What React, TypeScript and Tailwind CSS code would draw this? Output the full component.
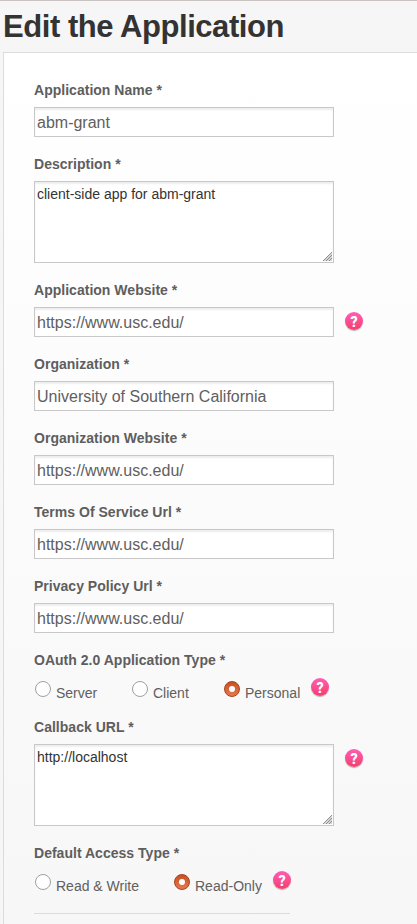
import React from "react";

function Label({ text }: { text: string }) {
  return (
    <div className="mb-[7px] h-5 whitespace-nowrap text-[14px] font-bold leading-5 tracking-[0.02px] text-[#5e5e5e]">
      {text} *
    </div>
  );
}

function Help({ className = "" }: { className?: string }) {
  return (
    <span
      className={`flex h-[18px] w-[18px] shrink-0 items-center justify-center rounded-full bg-linear-to-b from-[#ff5cb5] to-[#f43d6c] pt-px font-[Roboto,sans-serif] text-[14px] font-black leading-none text-white shadow-[0_1px_1px_rgba(0,0,0,0.3)] ${className}`}
    >
      ?
    </span>
  );
}

const box =
  "block w-[300px] rounded-none border border-[#c8c8c8] bg-white px-[2px] shadow-[inset_0_2px_2px_rgba(0,0,0,0.07)] outline-none";

function TextField({ label, value, help }: { label: string; value: string; help?: boolean }) {
  return (
    <div className="pt-[17px]">
      <Label text={label} />
      <div className="flex items-start">
        <input className={`${box} h-[30px] pt-[2px] text-[16px] text-[#606060]`} defaultValue={value} />
        {help && <Help className="ml-[11px] mt-[5px]" />}
      </div>
    </div>
  );
}

function AreaField({ label, value, help }: { label: string; value: string; help?: boolean }) {
  return (
    <div className="pt-[17px]">
      <Label text={label} />
      <div className="flex items-start">
        <div className="relative">
          <textarea
            className={`${box} h-[82px] resize-none py-[2px] text-[14px] leading-5 text-[#333]`}
            defaultValue={value}
          />
          <svg
            className="absolute bottom-[2px] right-[2px]"
            width="9"
            height="9"
            viewBox="0 0 9 9"
            stroke="#909090"
            strokeWidth="1"
          >
            <path d="M0 9L9 0V9Z" fill="#d6d6d6" stroke="none" />
            <path d="M0 9L9 0M3 9L9 3M6 9L9 6" />
          </svg>
        </div>
        {help && <Help className="ml-[11px] mt-[5px]" />}
      </div>
    </div>
  );
}

function Radio({ label, checked, className }: { label: string; checked?: boolean; className: string }) {
  return (
    <div className={`flex shrink-0 items-start ${className}`}>
      {checked ? (
        <span className="mt-[4px] flex h-4 w-4 shrink-0 items-center justify-center rounded-full border border-[#a8411b] bg-linear-to-b from-[#c94f20] to-[#e47a50]">
          <span className="h-[6px] w-[6px] rounded-full bg-white" />
        </span>
      ) : (
        <span className="mt-[4px] h-4 w-4 shrink-0 rounded-full border border-[#a0a0a0] bg-white" />
      )}
      <span className="ml-[5px] mt-[6px] whitespace-nowrap text-[14px] leading-5 text-[#606060]">{label}</span>
    </div>
  );
}

export default function App() {
  return (
    <div className="h-[924px] w-full overflow-hidden border-t border-[#c9c4c2] bg-[#f6f6f6] font-['Liberation_Sans',Arial,sans-serif]">
      <h1 className="h-[51px] whitespace-nowrap pl-[3px] pt-[6px] text-[31px] font-bold leading-10 tracking-[-0.45px] text-[#333]">
        Edit the Application
      </h1>
      <div className="ml-[3px] h-[880px] border-l border-t border-[#dcdcdc] bg-linear-to-b from-white to-[#f7f7f7] pl-[30px] pt-[10px]">
        <TextField label="Application Name" value="abm-grant" />
        <AreaField label="Description" value="client-side app for abm-grant" />
        <TextField label="Application Website" value="https://www.usc.edu/" help />
        <TextField label="Organization" value="University of Southern California" />
        <TextField label="Organization Website" value="https://www.usc.edu/" />
        <TextField label="Terms Of Service Url" value="https://www.usc.edu/" />
        <TextField label="Privacy Policy Url" value="https://www.usc.edu/" />
        <div className="h-[67px] pt-[17px]">
          <Label text="OAuth 2.0 Application Type" />
          <div className="flex items-start pl-px">
            <Radio label="Server" className="w-[97px]" />
            <Radio label="Client" className="w-[92px]" />
            <Radio label="Personal" checked className="w-[87px]" />
            <Help className="mt-px" />
          </div>
        </div>
        <AreaField label="Callback URL" value="http://localhost" help />
        <div className="h-[88px] w-[256px] border-b border-[#dcdcdc] pt-[17px]">
          <Label text="Default Access Type" />
          <div className="flex items-start pl-px">
            <Radio label="Read & Write" className="w-[139px]" />
            <Radio label="Read-Only" checked className="w-[99px]" />
            <Help className="mt-px" />
          </div>
        </div>
      </div>
    </div>
  );
}
